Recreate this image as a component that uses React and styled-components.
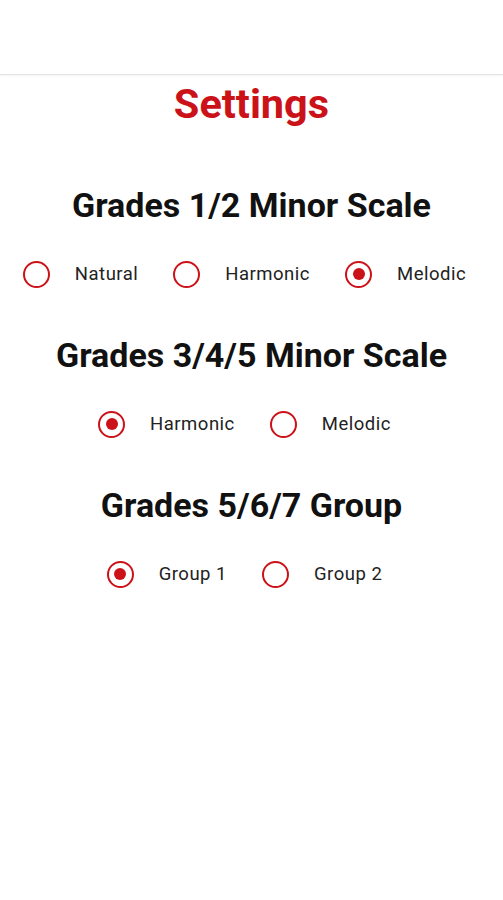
import React, { useState } from "react";
import styled, { createGlobalStyle } from "styled-components";

const Global = createGlobalStyle`
  html, body { margin: 0; padding: 0; background: #ffffff; }
  body { font-family: Roboto, "Noto Sans", "Liberation Sans", sans-serif; }
  * { box-sizing: border-box; }
`;

const RED = "#cc1219";

const Page = styled.div`
  width: 503px;
  min-height: 900px;
  background: #fff;
  display: flex;
  flex-direction: column;
`;

const TopBar = styled.header`
  height: 75px;
  background: #fff;
  border-bottom: 1px solid #e4e4e4;
  box-shadow: 0 1px 2px rgba(0, 0, 0, 0.05);
`;

const Title = styled.h1`
  margin: 8px 0 0;
  text-align: center;
  font-size: 41.5px;
  line-height: 42px;
  font-weight: 700;
  color: ${RED};
`;

const Section = styled.section`
  margin-top: ${(p) => p.$top}px;
  display: flex;
  flex-direction: column;
  align-items: center;
  gap: 29px;
`;

const Heading = styled.h2`
  margin: 0;
  font-size: 34px;
  line-height: 40px;
  font-weight: 700;
  color: #111;
  text-align: center;
`;

const Row = styled.div`
  display: flex;
  justify-content: center;
  align-items: center;
  gap: 21px;
  height: 40px;
`;

const Option = styled.label`
  display: flex;
  align-items: center;
  gap: 25px;
  padding-right: 14px;
  cursor: pointer;
`;

const Radio = styled.span`
  width: 27px;
  height: 27px;
  border-radius: 50%;
  border: 2.5px solid ${RED};
  display: flex;
  align-items: center;
  justify-content: center;
  flex: none;
  &::after {
    content: "";
    width: 12px;
    height: 12px;
    border-radius: 50%;
    background: ${RED};
    display: ${(p) => (p.$checked ? "block" : "none")};
  }
`;

const Label = styled.span`
  font-size: 18.5px;
  letter-spacing: 0.5px;
  color: #222;
  line-height: 22px;
`;

function Group({ title, options, initial, top }) {
  const [value, setValue] = useState(initial);
  return (
    <Section $top={top}>
      <Heading>{title}</Heading>
      <Row>
        {options.map((o) => (
          <Option key={o} onClick={() => setValue(o)}>
            <Radio $checked={value === o} />
            <Label>{o}</Label>
          </Option>
        ))}
      </Row>
    </Section>
  );
}

export default function App() {
  return (
    <Page>
      <Global />
      <TopBar />
      <Title>Settings</Title>
      <Group
        top={60}
        title="Grades 1/2 Minor Scale"
        options={["Natural", "Harmonic", "Melodic"]}
        initial="Melodic"
      />
      <Group
        top={41}
        title="Grades 3/4/5 Minor Scale"
        options={["Harmonic", "Melodic"]}
        initial="Harmonic"
      />
      <Group
        top={41}
        title="Grades 5/6/7 Group"
        options={["Group 1", "Group 2"]}
        initial="Group 1"
      />
    </Page>
  );
}
